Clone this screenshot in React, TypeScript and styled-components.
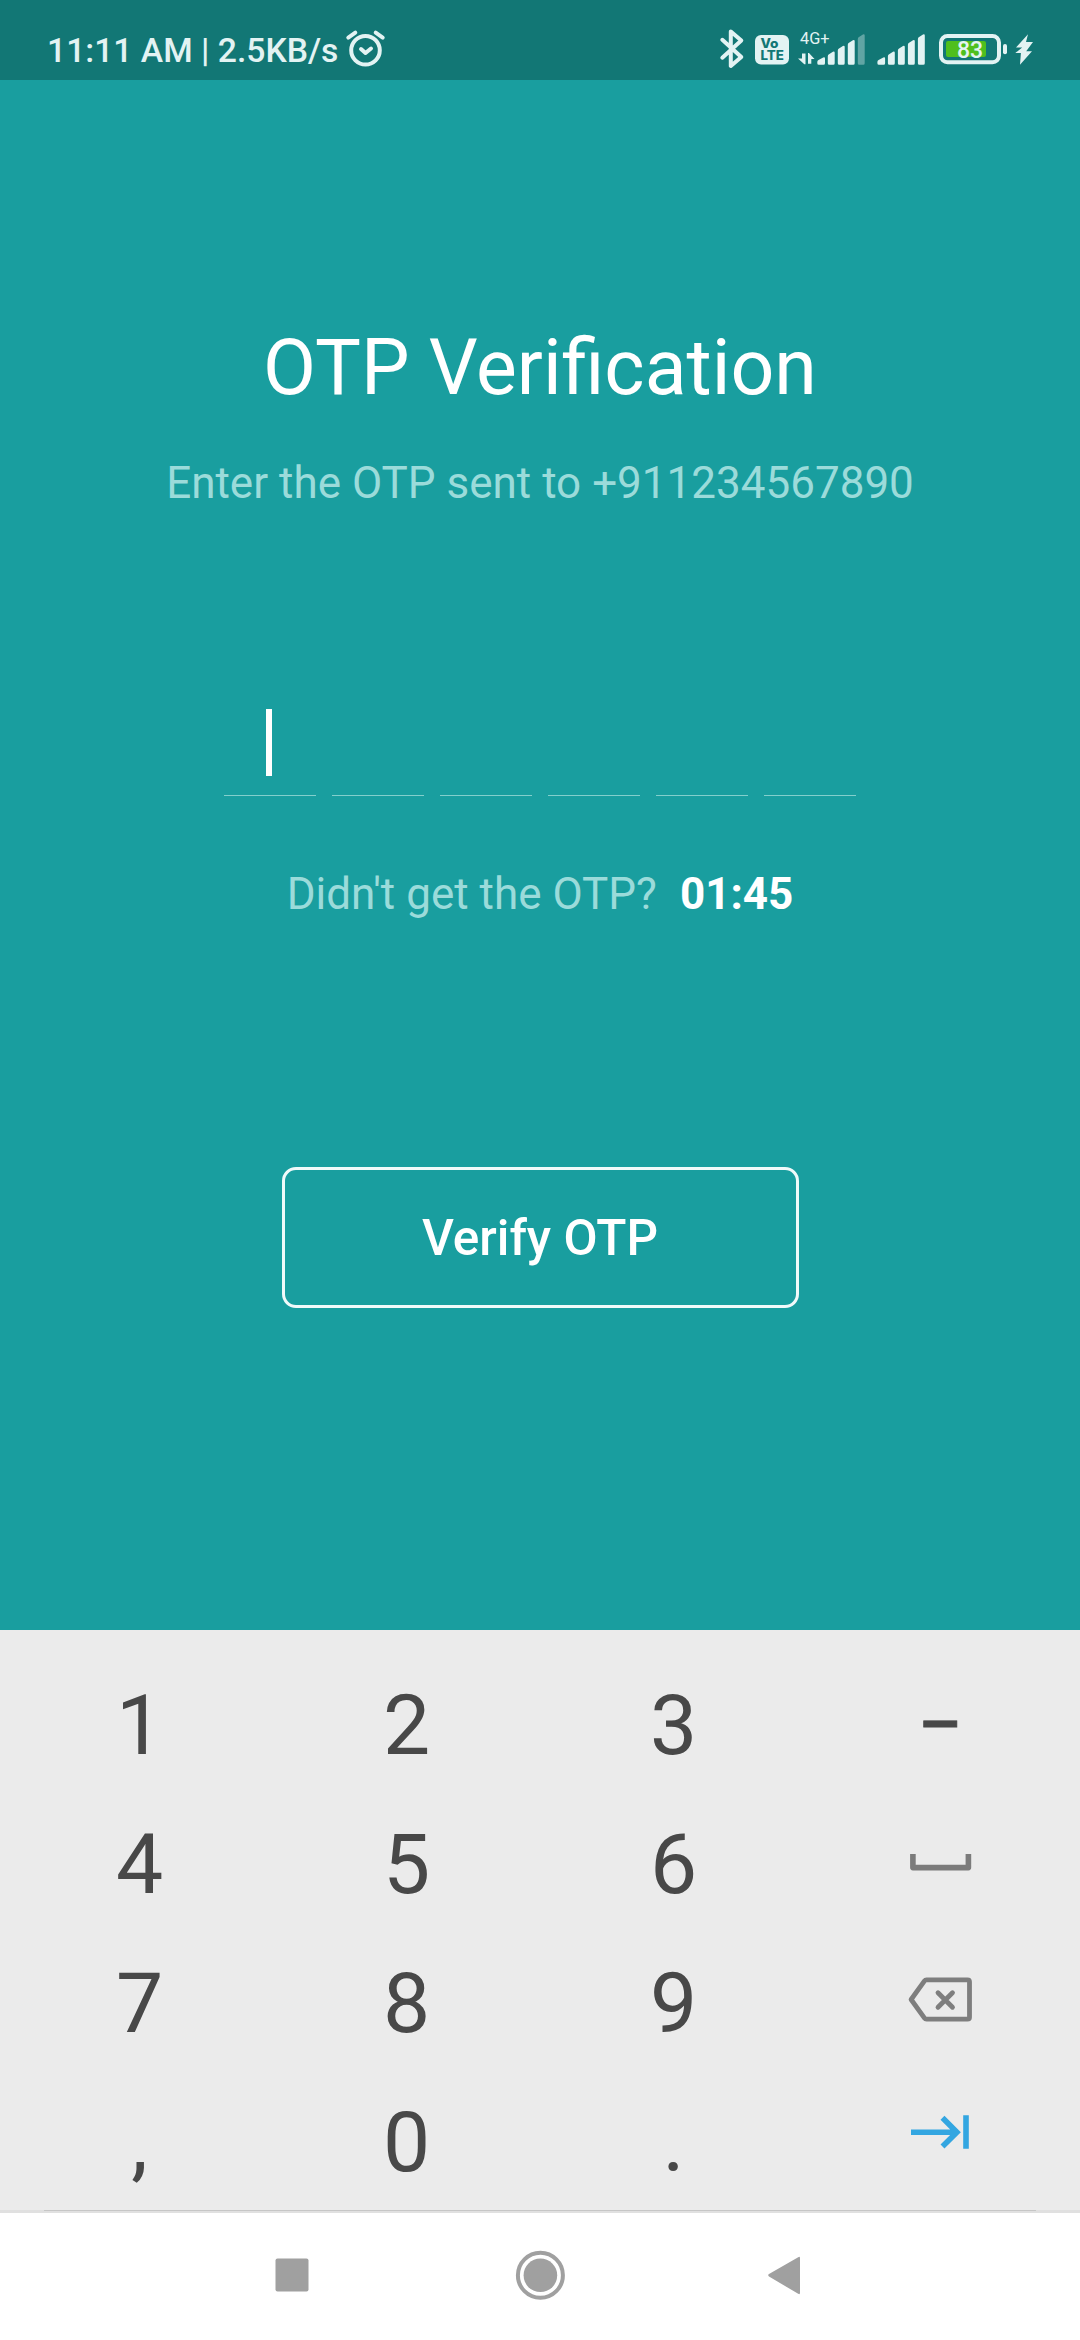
import React from "react";
import styled, { createGlobalStyle } from "styled-components";

const INK = "#e3f3f3";
const FONT = 'Roboto, "Noto Sans", sans-serif';

const GlobalStyle = createGlobalStyle`
  * { box-sizing: border-box; }
  body { margin: 0; font-family: ${FONT}; }
  button { font-family: inherit; border: 0; padding: 0; background: none; }
  svg { display: block; flex: none; }
`;

const Screen = styled.div`
  width: 1080px;
  height: 2340px;
  display: flex;
  flex-direction: column;
  overflow: hidden;
  background: #199e9f;
`;

const StatusBar = styled.header`
  height: 80px;
  flex: none;
  display: flex;
  justify-content: space-between;
  padding: 0 46px 0 47px;
  background: #127775;
  color: ${INK};
`;

const StatusGroup = styled.div`
  display: flex;
  height: 80px;
`;

const StatusText = styled.span`
  width: 297px;
  padding-top: 31px;
  font-size: 33.7px;
  line-height: 40px;
  font-weight: 500;
  white-space: nowrap;
`;

const Content = styled.main`
  height: 1550px;
  flex: none;
  display: flex;
  flex-direction: column;
  align-items: center;
  padding-top: 242px;
`;

const Title = styled.h1`
  margin: 0;
  font-size: 77px;
  line-height: 92px;
  font-weight: 400;
  color: #fff;
`;

const Note = styled.p`
  margin: 43px 0 0;
  font-size: 44px;
  line-height: 52px;
  color: #9bdbda;
`;

const OtpRow = styled.div`
  display: flex;
  gap: 16px;
  margin-top: 167px;
`;

const OtpCell = styled.div`
  width: 92px;
  height: 120px;
  padding: 33px 0 0 42px;
  border-bottom: 1px solid #83cfcc;
`;

const Caret = styled.div`
  width: 6px;
  height: 67px;
  background: #fff;
`;

const Resend = styled.div`
  display: flex;
  gap: 23px;
  margin-top: 72px;
  font-size: 44px;
  line-height: 52px;
  color: #9bdbda;
`;

const Timer = styled.span`
  font-weight: 700;
  color: #fff;
`;

const VerifyButton = styled.button`
  width: 517px;
  height: 141px;
  margin-top: 247px;
  border: 3px solid #f0fafa;
  border-radius: 14px;
  font-size: 49.5px;
  line-height: 58px;
  font-weight: 500;
  color: #fff;
`;

const Keyboard = styled.section`
  position: relative;
  height: 583px;
  flex: none;
  display: grid;
  grid-template-columns: repeat(4, 267px);
  grid-auto-rows: 139.25px;
  padding: 26px 6px 0;
  background: #ebebeb;

  &::before,
  &::after {
    content: "";
    position: absolute;
    bottom: 0;
    left: 0;
    right: 0;
    height: 3px;
    background: #e0e0e0;
  }
  &::after {
    bottom: 2px;
    left: 44px;
    right: 44px;
    height: 1px;
    background: #c6c6c6;
  }
`;

const Key = styled.button`
  display: flex;
  align-items: center;
  justify-content: center;
  font-size: 84px;
  line-height: 98px;
  color: #484848;
`;

const Dash = styled.span`
  transform: scaleX(0.81);
  -webkit-text-stroke: 0.8px #484848;
`;

const NavBar = styled.nav`
  flex: 1;
  display: flex;
  justify-content: center;
  gap: 184px;
  padding-top: 32px;
  background: #fff;
`;

const Alarm = () => (
  <svg width="44" height="80" viewBox="344 0 44 80" fill="none" stroke={INK} strokeLinecap="round">
    <circle cx="365.5" cy="50.3" r="14.3" strokeWidth="4" />
    <path d="M361 49l4.5 4 5.5-4.5" strokeWidth="4" strokeLinejoin="round" />
    <path d="M348.3 37.6l7-4.9M382.7 37.6l-7-4.9" strokeWidth="4" />
  </svg>
);

const Bluetooth = () => (
  <svg width="35" height="80" viewBox="718 0 35 80" fill="none" stroke={INK}>
    <path d="M722.3 39.8l19 17.2-10.5 9V31.5l10.5 9-19 17.2" strokeWidth="4" strokeLinecap="round" strokeLinejoin="round" />
  </svg>
);

const Volte = () => (
  <svg width="43" height="80" viewBox="753 0 43 80">
    <rect x="755" y="35" width="34" height="29.5" rx="6" fill={INK} />
    <g fill="#127775" fontFamily="Inter, Roboto, sans-serif" fontWeight="800" fontSize="12.6">
      <text x="760.5" y="48" textLength="18" lengthAdjust="spacingAndGlyphs">Vo</text>
      <text x="760.5" y="60.4" textLength="23.5" lengthAdjust="spacingAndGlyphs">LTE</text>
    </g>
  </svg>
);

const BARS = [
  { x: 0, w: 7.7, top: 57 },
  { x: 10.5, w: 6.9, top: 51.3 },
  { x: 20.5, w: 6.9, top: 45.5 },
  { x: 30.5, w: 6.9, top: 39.8 },
  { x: 40.5, w: 6.9, top: 34 },
];

const SignalBars = ({ left, dimLast }: { left: number; dimLast?: boolean }) => (
  <g fill={INK}>
    {BARS.map(({ x, w, top }, i) => (
      <path
        key={x}
        opacity={dimLast && i === 4 ? 0.38 : 1}
        d={`M${left + x} ${top + 5}q0-1.4 1.2-2l${w - 3}-2.6q1.8-.7 1.8 1V63.2q0 1.5-1.5 1.5h${-(w - 3)}q-1.5 0-1.5-1.5z`}
      />
    ))}
  </g>
);

const MobileSignal = () => (
  <svg width="79" height="80" viewBox="796 0 79 80">
    <text x="800" y="44" fill={INK} fontFamily={FONT} fontSize="16.5" textLength="29.5" lengthAdjust="spacingAndGlyphs">4G+</text>
    <path d="M802 53.5h3.5v10.7h-1.2l-6.3-5.7h4zM808 53h1l5.5 6h-3.2v4.8H808z" fill={INK} />
    <SignalBars left={817.3} dimLast />
  </svg>
);

const SecondSignal = () => (
  <svg width="62" height="80" viewBox="875 0 62 80">
    <SignalBars left={877.4} />
  </svg>
);

const Battery = () => (
  <svg width="76" height="80" viewBox="937 0 76 80">
    <rect x="941" y="36" width="58" height="26.3" rx="6.5" fill="none" stroke={INK} strokeWidth="4" />
    <rect x="946" y="41" width="40" height="16" rx="2" fill="#4fbf1d" />
    <rect x="1003" y="44" width="4" height="10.3" rx="2" fill={INK} />
    <text x="970" y="58" textAnchor="middle" fill={INK} fontFamily={FONT} fontWeight="500" fontSize="23">83</text>
  </svg>
);

const Bolt = () => (
  <svg width="21" height="80" viewBox="1013 0 21 80">
    <path d="M1028 34.3L1016 47.5h6.2L1015.3 53h5.6l-.9 11.7 12-13.4h-5.8l6.8-9.3h-7z" fill={INK} />
  </svg>
);

const SpaceIcon = () => (
  <svg width="267" height="139" viewBox="807 1795 267 139" fill="none" stroke="#7b7b7b">
    <path d="M912.9 1854v13.6h55.5V1854" strokeWidth="5.6" strokeLinejoin="round" />
  </svg>
);

const BackspaceIcon = () => (
  <svg width="267" height="139" viewBox="807 1934.5 267 139" fill="none" stroke="#7e7e7e" strokeLinejoin="round">
    <path d="M926.5 1979.3h41q2 0 2 2v35.4q0 2-2 2h-41q-1.2 0-2-1.1l-13.4-18.6 13.4-18.6q.8-1.1 2-1.1z" strokeWidth="4.8" />
    <path d="M938 1992.2l14.5 14.5m0-14.5l-14.5 14.5" strokeWidth="4.8" strokeLinecap="round" />
  </svg>
);

const NextIcon = () => (
  <svg width="267" height="139" viewBox="807 2073.7 267 139" fill="none" stroke="#33a6e1">
    <path d="M911 2131.9h45M942.5 2117.5l14.4 14.4-14.4 14.4M966 2115v33.5" strokeWidth="5.6" />
  </svg>
);

const KEYS: { id: string; face: React.ReactNode }[] = [
  ..."123".split("").map((c) => ({ id: c, face: c })),
  { id: "dash", face: <Dash>–</Dash> },
  ..."456".split("").map((c) => ({ id: c, face: c })),
  { id: "space", face: <SpaceIcon /> },
  ..."789".split("").map((c) => ({ id: c, face: c })),
  { id: "backspace", face: <BackspaceIcon /> },
  ...",0.".split("").map((c) => ({ id: c, face: c })),
  { id: "next", face: <NextIcon /> },
];

export default function App() {
  return (
    <>
      <GlobalStyle />
      <Screen>
        <StatusBar>
          <StatusGroup>
            <StatusText>11:11 AM | 2.5KB/s</StatusText>
            <Alarm />
          </StatusGroup>
          <StatusGroup>
            <Bluetooth />
            <Volte />
            <MobileSignal />
            <SecondSignal />
            <Battery />
            <Bolt />
          </StatusGroup>
        </StatusBar>
        <Content>
          <Title>OTP Verification</Title>
          <Note>Enter the OTP sent to +911234567890</Note>
          <OtpRow>
            {[0, 1, 2, 3, 4, 5].map((i) => (
              <OtpCell key={i}>{i === 0 && <Caret />}</OtpCell>
            ))}
          </OtpRow>
          <Resend>
            <span>Didn't get the OTP?</span>
            <Timer>01:45</Timer>
          </Resend>
          <VerifyButton>Verify OTP</VerifyButton>
        </Content>
        <Keyboard>
          {KEYS.map((k) => (
            <Key key={k.id}>{k.face}</Key>
          ))}
        </Keyboard>
        <NavBar>
          <svg width="60" height="60" viewBox="266 2245 60 60">
            <rect x="275.5" y="2258.5" width="33" height="33" rx="2" fill="#a0a0a0" />
          </svg>
          <svg width="60" height="60" viewBox="510 2245 60 60">
            <circle cx="540.4" cy="2275.3" r="22.5" fill="none" stroke="#a0a0a0" strokeWidth="4" />
            <circle cx="540.4" cy="2275.3" r="16.8" fill="#a0a0a0" />
          </svg>
          <svg width="60" height="60" viewBox="754 2245 60 60">
            <path d="M798.2 2257.2q1.8-1.2 1.8 1v34.6q0 2.2-1.8 1l-29.2-17.3q-1.6-1.2 0-2.4z" fill="#a0a0a0" />
          </svg>
        </NavBar>
      </Screen>
    </>
  );
}
